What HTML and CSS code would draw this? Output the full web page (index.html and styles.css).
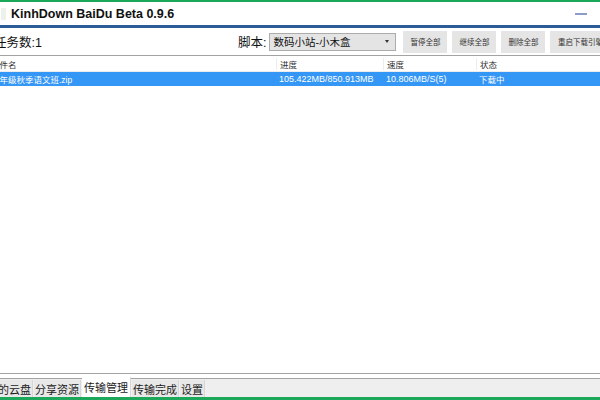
FILE: index.html
```html
<!DOCTYPE html>
<html lang="zh-CN">
<head>
    <meta charset="UTF-8">
    <meta name="viewport" content="width=device-width, initial-scale=1.0">
    <title>KinhDown BaiDu Beta 0.9.6</title>
    <link rel="stylesheet" href="styles.css">
</head>
<body>
<div class="window">
    <div class="accent"></div>

    <!-- Title bar -->
    <header class="titlebar">
        <span class="app-icon"></span>
        <h1 class="title">KinhDown BaiDu Beta 0.9.6</h1>
        <span class="btn-min"></span>
    </header>

    <!-- Toolbar -->
    <div class="toolbar">
        <div class="task-count">任务数:1</div>
        <span class="script-label">脚本:</span>
        <div class="select">
            <span>数码小站-小木盒</span>
            <span class="caret"></span>
        </div>
        <div class="actions">
            <button class="btn">暂停全部</button>
            <button class="btn">继续全部</button>
            <button class="btn">删除全部</button>
            <button class="btn">重启下载引擎</button>
        </div>
    </div>

    <!-- Transfer list -->
    <div class="list">
        <div class="row head">
            <span>文件名</span>
            <span>进度</span>
            <span>速度</span>
            <span>状态</span>
        </div>
        <div class="row selected">
            <span>三年级秋季语文班.zip</span>
            <span>105.422MB/850.913MB</span>
            <span>10.806MB/S(5)</span>
            <span>下载中</span>
        </div>
    </div>

    <!-- Bottom tabs -->
    <div class="tabs">
        <div class="tab">我的云盘</div>
        <div class="tab">分享资源</div>
        <div class="tab active">传输管理</div>
        <div class="tab">传输完成</div>
        <div class="tab">设置</div>
    </div>
    <div class="accent"></div>
</div>
</body>
</html>
```

FILE: styles.css
```css
/* General Styles */
body {
    margin: 0;
    padding: 0;
    background: #fff;
    font-family: "Liberation Sans", "Noto Sans CJK SC", sans-serif;
    color: #222;
}

.window {
    width: 600px;
    height: 400px;
    display: flex;
    flex-direction: column;
    overflow: hidden;
    background: #fff;
}

.accent {
    height: 2px;
    background: #1ca85b;
    flex-shrink: 0;
}

.window > .accent:last-child {
    height: 3px;
}

/* Title bar */
.titlebar {
    height: 23px;
    display: flex;
    align-items: center;
    border-bottom: 3px solid #2b5c98;
    flex-shrink: 0;
}

.app-icon {
    width: 5px;
    height: 12px;
    margin-left: 1px;
    background: #eef0ec;
}

.title {
    margin: 0 0 0 5px;
    font-size: 12.5px;
    font-weight: bold;
    color: #111;
}

.btn-min {
    width: 12px;
    height: 2px;
    margin: 0 13px 0 auto;
    background: #8a9cc9;
}

/* Toolbar */
.toolbar {
    height: 27px;
    display: flex;
    align-items: center;
    border-bottom: 1px solid #a3a3a3;
    flex-shrink: 0;
    white-space: nowrap;
}

.task-count {
    margin-left: -6px;
    width: 244px;
    flex-shrink: 0;
    font-size: 12.5px;
    color: #111;
}

.script-label {
    font-size: 12.5px;
    color: #111;
}

.select {
    width: 122px;
    height: 16px;
    margin-left: 3px;
    display: flex;
    align-items: center;
    justify-content: space-between;
    padding: 0 0 0 3px;
    background: #e4e4e4;
    border: 1px solid #acacac;
    font-size: 10.5px;
    color: #111;
    flex-shrink: 0;
}

.caret {
    width: 0;
    height: 0;
    margin-right: 6px;
    border-left: 2.5px solid transparent;
    border-right: 2.5px solid transparent;
    border-top: 3px solid #333;
}

.actions {
    display: flex;
    gap: 5px;
    margin-left: 7px;
    flex-shrink: 0;
}

.btn {
    width: 44px;
    height: 22px;
    padding: 0;
    border: none;
    background: #e5e5e5;
    font-family: "Noto Sans CJK SC", sans-serif;
    font-size: 7.5px;
    color: #333;
}

.btn:last-child {
    width: 60px;
}

/* List */
.list {
    flex: 1;
    border-bottom: 1px solid #a3a3a3;
}

.row {
    display: grid;
    grid-template-columns: 288px 107px 93px 1fr;
    margin-left: -12px;
    align-items: center;
    white-space: nowrap;
}

.row span {
    padding-left: 3px;
    overflow: hidden;
}

.head {
    height: 15px;
    font-size: 8.5px;
    color: #333;
    border-bottom: 1px solid #ececec;
}

.head span + span {
    border-left: 1px solid #ececec;
}

.selected {
    height: 14px;
    background: #3496f5;
    color: #fff;
    font-size: 9px;
}

.selected span:first-child,
.selected span:last-child {
    font-size: 8.5px;
}

/* Tabs */
.tabs {
    height: 18px;
    margin-top: 4px;
    display: flex;
    align-items: flex-end;
    gap: 1px;
    background: #efefef;
    border-top: 1px solid #a3a3a3;
    flex-shrink: 0;
}

.tab {
    height: 17px;
    padding: 0 1px;
    display: flex;
    align-items: center;
    background: #e8e8e8;
    border-right: 1px solid #d6d6d6;
    font-family: "Noto Sans CJK SC", sans-serif;
    font-size: 11px;
    color: #222;
}

.tab:first-child {
    margin-left: -14px;
}

.tab.active {
    height: 20px;
    margin-top: -3px;
    background: #fff;
    padding: 0 2px;
}
```
